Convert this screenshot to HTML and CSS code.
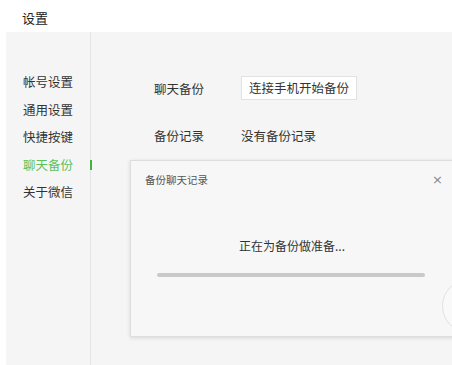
FILE: index.html
```html
<!DOCTYPE html>
<html>
<head>
<meta charset="utf-8">
<link rel="stylesheet" href="styles.css">
</head>
<body>
<div class="titlebar">设置</div>
<div class="window">
  <ul class="sidebar">
    <li class="nav-item">帐号设置</li>
    <li class="nav-item">通用设置</li>
    <li class="nav-item">快捷按键</li>
    <li class="nav-item active">聊天备份</li>
    <li class="nav-item">关于微信</li>
  </ul>
  <div class="main">
    <div class="row row-first">
      <span class="label">聊天备份</span>
      <span class="btn">连接手机开始备份</span>
    </div>
    <div class="row">
      <span class="label">备份记录</span>
      <span class="value">没有备份记录</span>
    </div>
    <div class="dialog">
      <div class="dialog-head">
        <span class="dialog-title">备份聊天记录</span>
        <span class="close">×</span>
      </div>
      <div class="dialog-msg">正在为备份做准备...</div>
      <div class="progress"></div>
      <div class="ring"></div>
    </div>
  </div>
</div>
</body>
</html>
```
FILE: styles.css
```css
* { box-sizing: border-box; }
html, body {
  margin: 0;
  padding: 0;
  background: #ffffff;
  width: 452px;
  height: 365px;
  overflow: hidden;
  font-family: "Noto Sans CJK SC", "Noto Sans", sans-serif;
  color: #333;
}
.titlebar {
  height: 32px;
  padding-left: 22px;
  padding-top: 9px;
  font-size: 13px;
  line-height: 17px;
  color: #222;
}
.window {
  margin-left: 6px;
  height: 333px;
  background: #f5f5f5;
  display: flex;
}
.sidebar {
  list-style: none;
  margin: 0;
  padding: 36px 0 0 17px;
  width: 85px;
  flex: none;
  border-right: 1px solid #e4e4e4;
}
.nav-item {
  position: relative;
  height: 27.5px;
  line-height: 27.5px;
  font-size: 12.5px;
  color: #333;
  white-space: nowrap;
}
.nav-item.active { color: #5cc15c; }
.nav-item.active::after {
  content: "";
  position: absolute;
  right: -2px;
  top: 9px;
  width: 2px;
  height: 10px;
  background: #3fb53f;
}
.main {
  position: relative;
  flex: 1;
  padding-left: 63px;
  padding-top: 44px;
}
.row {
  display: flex;
  align-items: center;
  height: 24px;
  font-size: 12.5px;
  color: #333;
}
.row + .row { margin-top: 23px; }
.label { width: 87px; flex: none; }
.btn {
  height: 24px;
  line-height: 22px;
  padding: 0 7px;
  background: #fff;
  border: 1px solid #e2e2e2;
}
.dialog {
  position: absolute;
  left: 39px;
  top: 128px;
  width: 330px;
  height: 177px;
  background: #f7f7f8;
  border: 1px solid #dedede;
  box-shadow: 0 1px 4px rgba(0,0,0,0.12);
  overflow: hidden;
}
.dialog-head {
  display: flex;
  justify-content: space-between;
  align-items: center;
  height: 40px;
  padding: 0 12px 4px 14px;
}
.dialog-title { font-size: 10.5px; color: #555; }
.close { font-size: 13px; color: #888; margin-right: 4px; font-family: "DejaVu Sans", sans-serif; }
.dialog-msg {
  width: 322px;
  text-align: center;
  font-size: 12px;
  color: #333;
  margin-top: 36px;
}
.progress {
  margin: 19px 0 0 26px;
  width: 268px;
  height: 4px;
  border-radius: 2px;
  background: #c9c9c9;
}
.ring {
  position: absolute;
  left: 311px;
  top: 118px;
  width: 54px;
  height: 54px;
  border-radius: 50%;
  border: 1.5px solid #e2e2e2;
  background: #f9f9f9;
}
```
